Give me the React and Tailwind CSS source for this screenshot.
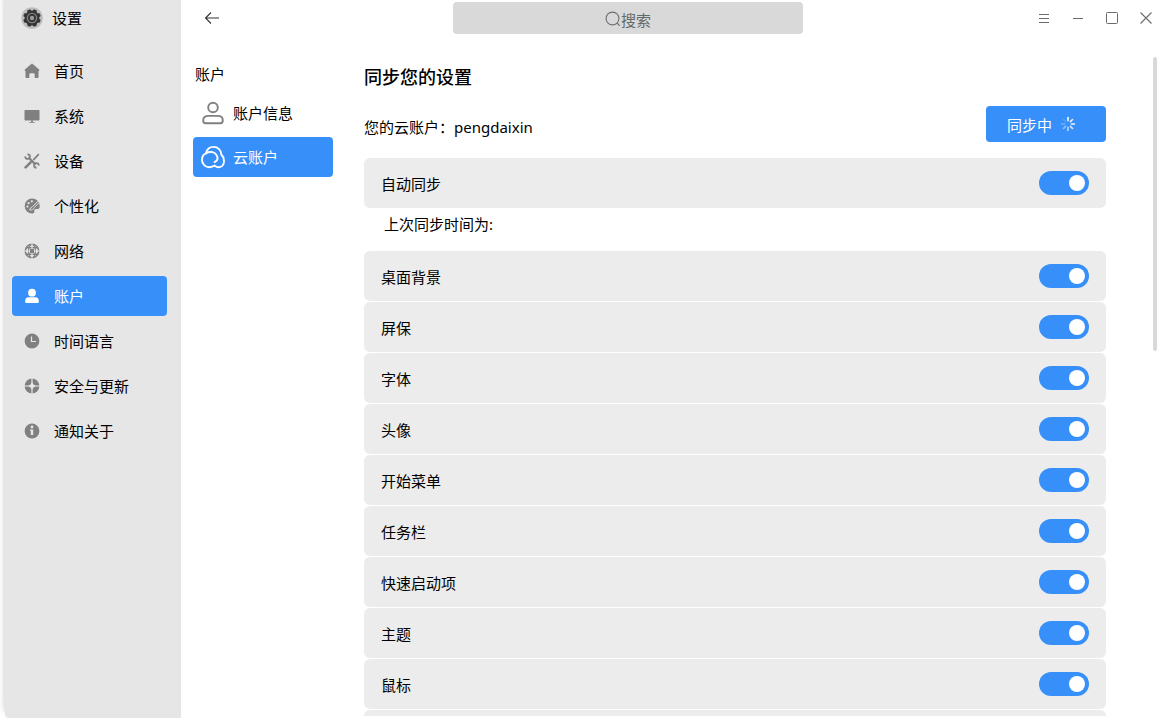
import React from 'react';

const HomeIcon = () => (
  <svg viewBox="0 0 16 16" className="w-4 h-4" fill="currentColor">
    <path d="M7.3.9a1.100 1.100 0 0 1 1.400 0l6.400 5.700c.6.5.3 1.300-.4 1.300H14.500v6.100a1 1 0 0 1-1 1h-2.800v-3.500a1.200 1.200 0 0 0-1.200-1.200h-3a1.200 1.200 0 0 0-1.200 1.200V15H2.500a1 1 0 0 1-1-1V7.900h-.2c-.7 0-1-.8-.4-1.300z" />
  </svg>
);

const MonitorIcon = () => (
  <svg viewBox="0 0 16 16" className="w-4 h-4" fill="currentColor">
    <rect x="0.5" y="2" width="15" height="10.5" rx="0.8" />
    <path d="M7 12.5h2V14h1.8v.8H5.2V14H7z" />
  </svg>
);

const ToolsIcon = () => (
  <svg viewBox="0 0 16 16" className="w-4 h-4" fill="none" stroke="currentColor">
    <path d="M3.400 1.300c1.900-.2 3 1.300 2.300 3L4.300 5.700C2.600 6.400 1.100 5.100 1.300 3.300" strokeWidth="1.800" />
    <path d="M4.800 4.800l6.600 6.600" strokeWidth="2.200" />
    <path d="M12.600 14.700c-1.900.2-3-1.300-2.300-3l1.400-1.400c1.700-.7 3.200.6 3 2.400" strokeWidth="1.800" />
    <path d="M14.800 1.200L9.400 6.800" strokeWidth="1.800" />
    <path d="M6.600 9.400l-5 5" strokeWidth="2.600" strokeLinecap="round" />
  </svg>
);

const PaletteIcon = () => (
  <svg viewBox="0 0 16 16" className="w-4 h-4">
    <path
      fill="currentColor"
      d="M8 .5a7.500 7.500 0 1 0 .3 15c1.800-.1 2.300-1.200 2-2.300-.3-1.400.6-2.200 1.900-2.200h1.600c1.300 0 1.900-1.200 1.900-3A7.500 7.500 0 0 0 8 .5z"
    />
    <g fill="#e6e6e6">
      <circle cx="3.400" cy="8.600" r="1.100" />
      <circle cx="4.600" cy="5.200" r="1.100" />
      <circle cx="7.800" cy="3.300" r="1.100" />
    </g>
    <path d="M14.200 3L8.600 8.600M8.400 8.600c-1.500.2-1.500 2.200-3 3.200" fill="none" stroke="#e6e6e6" strokeWidth="1" />
    <path d="M15.200 4.600L9.800 10c0 1.400-2 2.400-4.200 1.900" fill="none" stroke="#e6e6e6" strokeWidth="0.900" />
  </svg>
);

const GlobeIcon = () => (
  <svg viewBox="0 0 16 16" className="w-4 h-4" fill="none">
    <circle cx="8" cy="8" r="6.700" stroke="currentColor" strokeWidth="1.600" />
    <ellipse cx="8" cy="8" rx="3.500" ry="6.700" stroke="currentColor" strokeWidth="1.200" />
    <path d="M2 4.800h12M2 11.200h12" stroke="currentColor" strokeWidth="1.400" />
    <path d="M8 0v16M0 8h16" stroke="#e6e6e6" strokeWidth="1" />
    <rect x="6" y="6" width="4" height="4" fill="currentColor" />
  </svg>
);

const UserIcon = () => (
  <svg viewBox="0 0 16 16" className="w-4 h-4" fill="currentColor">
    <circle cx="8" cy="4.700" r="3.900" />
    <path d="M4.500 9.200h7c2 0 3.300 1.300 3.300 3.300v1.300a1.200 1.200 0 0 1-1.200 1.200H2.400a1.200 1.200 0 0 1-1.200-1.200v-1.300c0-2 1.300-3.300 3.300-3.300z" />
  </svg>
);

const ClockIcon = () => (
  <svg viewBox="0 0 16 16" className="w-4 h-4">
    <circle cx="8" cy="8" r="7.400" fill="currentColor" />
    <path d="M7.500 3.500v5H12" fill="none" stroke="#e6e6e6" strokeWidth="1.200" />
  </svg>
);

const ShieldIcon = () => (
  <svg viewBox="0 0 16 16" className="w-4 h-4">
    <circle cx="8" cy="8" r="7.400" fill="currentColor" />
    <path d="M8 0v16M0 8h16" stroke="#e6e6e6" strokeWidth="1.200" />
    <path d="M8 4.200L9.500 6.500 11.800 8 9.500 9.500 8 11.800 6.500 9.500 4.200 8l2.300-1.500z" fill="#e6e6e6" />
  </svg>
);

const InfoIcon = () => (
  <svg viewBox="0 0 16 16" className="w-4 h-4">
    <circle cx="8" cy="8" r="7.400" fill="currentColor" />
    <circle cx="8" cy="4" r="1.400" fill="#e6e6e6" />
    <path d="M6 6.400h3.200V12H6.800V7.800H6z" fill="#e6e6e6" />
  </svg>
);

const GearLogo = () => (
  <svg viewBox="0 0 22 22" className="w-[22px] h-[22px]">
    <circle cx="11" cy="11" r="10.800" fill="#bdbdbd" />
    <g fill="#353535">
      <circle cx="11" cy="11" r="7.400" />
      {[0, 45, 90, 135, 180, 225, 270, 315].map((angle) => (
        <path key={angle} d="M8.900 4.500l.5-2.300h3.200l.5 2.300z" transform={`rotate(${angle + 22.5} 11 11)`} />
      ))}
    </g>
    <circle cx="11" cy="11" r="4.700" fill="none" stroke="#8a8a8a" strokeWidth="1.100" />
    <circle cx="11" cy="11" r="2.200" fill="#9a9a9a" />
  </svg>
);

const AccountIcon = () => (
  <svg viewBox="0 0 24 24" className="w-6 h-6" fill="none" stroke="#808080" strokeWidth="1.900">
    <circle cx="12" cy="6.500" r="4.800" />
    <path d="M7.500 14.900h9c3.300 0 5.300 1.600 5.300 4.300 0 1.900-.8 3-2.400 3H4.600c-1.600 0-2.400-1.100-2.400-3 0-2.700 2-4.300 5.300-4.300z" />
  </svg>
);

const CloudIcon = () => (
  <svg viewBox="0 0 24 24" className="w-6 h-6" fill="none" stroke="#fff" strokeWidth="1.900" strokeLinecap="round">
    <path d="M13.600 20.600c-1.400 1.100-3.200 1.600-5.100 1.600C4.300 22.200 1 19 1 14.900c0-3.200 1.500-5.600 3.900-6.600C5.900 4.500 8.700 1.900 12.400 1.900c4.600 0 7.900 3.300 7.900 7.600 1.700 1.600 2.700 3.900 2.700 6.400 0 3.700-2.100 6.300-5.200 6.300-1.600 0-3-.5-4.200-1.600" />
    <path d="M4.900 8.300c4.600-2.600 9.400-1.200 11.100 2.500 1.200 2.700.2 4.900-2.400 6.300" />
  </svg>
);

const Spinner = () => (
  <svg viewBox="0 0 16 16" className="w-4 h-4" stroke="#fff" strokeWidth="1.600" strokeLinecap="round">
    {[1, 0.9, 0.95, 0.8, 0.65, 0.45, 0.3, 0.15].map((opacity, i) => (
      <path key={i} d="M8 1.600v3" opacity={opacity} transform={`rotate(${i * 45} 8 8)`} />
    ))}
  </svg>
);

const navItems = [
  { label: '首页', Icon: HomeIcon },
  { label: '系统', Icon: MonitorIcon },
  { label: '设备', Icon: ToolsIcon },
  { label: '个性化', Icon: PaletteIcon },
  { label: '网络', Icon: GlobeIcon },
  { label: '账户', Icon: UserIcon, active: true },
  { label: '时间语言', Icon: ClockIcon },
  { label: '安全与更新', Icon: ShieldIcon },
  { label: '通知关于', Icon: InfoIcon },
];

const syncItems = ['桌面背景', '屏保', '字体', '头像', '开始菜单', '任务栏', '快速启动项', '主题', '鼠标'];

const SwitchRow = ({ label }) => (
  <label className="flex h-[50px] shrink-0 items-center justify-between rounded-md bg-[#ececec] px-[17px]">
    <span className="pt-0.5">{label}</span>
    <input
      type="checkbox"
      role="switch"
      defaultChecked
      className="flex h-6 w-[50px] appearance-none items-center rounded-full bg-[#b4b4b4] px-1 before:h-4 before:w-4 before:rounded-full before:bg-white checked:justify-end checked:bg-[#3790fa]"
    />
  </label>
);

const Sidebar = () => (
  <aside className="flex w-44 shrink-0 flex-col rounded-bl bg-[#e6e6e6] shadow-[0_-6px_6px_rgba(0,0,0,0.25)]">
    <div className="flex h-9 items-center gap-[9px] pl-4">
      <GearLogo />
      <h1>设置</h1>
    </div>
    <nav className="flex flex-col gap-[5px] pl-[7px] pr-3.5 pt-[15px]">
      {navItems.map(({ label, Icon, active }) => (
        <a
          key={label}
          href="#"
          className={`flex h-10 items-center gap-3.5 rounded pl-3 ${active ? 'bg-[#3790fa] text-white' : ''}`}
        >
          <span className={active ? 'text-white' : 'text-[#808080]'}>
            <Icon />
          </span>
          {label}
        </a>
      ))}
    </nav>
  </aside>
);

const TitleBar = () => (
  <header className="flex h-9 shrink-0 items-center justify-between pl-[23px] pr-[11px]">
    <button type="button" aria-label="返回" className="w-4">
      <svg viewBox="0 0 16 16" className="w-4 h-4" fill="none" stroke="#333" strokeWidth="1.100">
        <path d="M15 8H1.500M7 2.500L1.500 8 7 13.500" />
      </svg>
    </button>
    <label className="flex h-8 w-[350px] items-center justify-center rounded bg-[#d9d9d9] text-[#5f6a6a]">
      <svg viewBox="0 0 16 16" className="w-4 h-4" fill="none" stroke="#707070" strokeWidth="1.100">
        <circle cx="7.500" cy="8.500" r="6.400" />
        <path d="M12 13l2.800 2.800" />
      </svg>
      <input
        type="text"
        aria-label="搜索"
        placeholder="搜索"
        className="field-sizing-content pt-1 leading-6 outline-none placeholder:text-[#5f6a6a]"
      />
    </label>
    <div className="flex gap-[18px] text-[#6b6b6b]">
      <button type="button" aria-label="菜单">
        <svg viewBox="0 0 16 16" className="w-4 h-4" fill="none" stroke="currentColor">
          <path d="M3 4.500h10M3 8.500h10M3 12.500h10" />
        </svg>
      </button>
      <button type="button" aria-label="最小化">
        <svg viewBox="0 0 16 16" className="w-4 h-4" fill="none" stroke="currentColor">
          <path d="M3 8.500h10" />
        </svg>
      </button>
      <button type="button" aria-label="最大化">
        <svg viewBox="0 0 16 16" className="w-4 h-4" fill="none" stroke="currentColor">
          <rect x="2.500" y="2.500" width="11" height="11" rx="1" />
        </svg>
      </button>
      <button type="button" aria-label="关闭">
        <svg viewBox="0 0 16 16" className="w-4 h-4" fill="none" stroke="currentColor" strokeWidth="1.100">
          <path d="M2.500 2.500l11 11M13.500 2.500l-11 11" />
        </svg>
      </button>
    </div>
  </header>
);

const AccountMenu = () => (
  <nav className="flex w-[140px] shrink-0 flex-col pt-[26px]">
    <h2 className="pl-0.5 leading-6">账户</h2>
    <a href="#" className="mt-[7px] flex h-10 items-center gap-2 rounded pl-2">
      <AccountIcon />
      账户信息
    </a>
    <a href="#" className="mt-1 flex h-10 items-center gap-2 rounded bg-[#3790fa] pl-2 text-white">
      <CloudIcon />
      云账户
    </a>
  </nav>
);

const SyncPanel = () => (
  <section className="flex min-w-0 grow flex-col overflow-hidden pt-[29px]">
    <h2 className="text-lg leading-6 font-medium">同步您的设置</h2>
    <div className="mt-[17px] flex items-center justify-between">
      <p className="pt-1.5">您的云账户：pengdaixin</p>
      <button type="button" className="flex h-9 w-[120px] items-center gap-2 rounded bg-[#3790fa] pl-[21px] text-white">
        <span className="pt-0.5">同步中</span>
        <Spinner />
      </button>
    </div>
    <div className="mt-4 flex flex-col">
      <SwitchRow label="自动同步" />
      <p className="pl-5 pt-1 pb-[15px] leading-6">上次同步时间为:</p>
    </div>
    <div className="flex grow flex-col gap-px">
      {syncItems.map((label) => (
        <SwitchRow key={label} label={label} />
      ))}
      {/* top edge of the next card, below the fold */}
      <div className="grow rounded-t-md bg-[#ececec]"></div>
    </div>
  </section>
);

export default function App() {
  return (
    <div className="h-screen bg-white pb-0.5 font-['Noto_Sans','Noto_Sans_CJK_SC',sans-serif] text-[15px] leading-6 text-black">
      <div className="flex h-full overflow-hidden pl-[5px]">
        <Sidebar />
        <main className="z-10 flex min-w-0 grow flex-col bg-white">
          <TitleBar />
          <div className="flex min-h-0 grow pl-3 pr-2 pb-0.5">
            <AccountMenu />
            <div className="flex min-w-0 grow pl-[31px] pr-[47px]">
              <SyncPanel />
            </div>
            <div className="w-1 shrink-0 pt-[21px]">
              <div className="h-[294px] max-h-full rounded-full bg-[#d9d9d9]"></div>
            </div>
          </div>
        </main>
      </div>
    </div>
  );
}
